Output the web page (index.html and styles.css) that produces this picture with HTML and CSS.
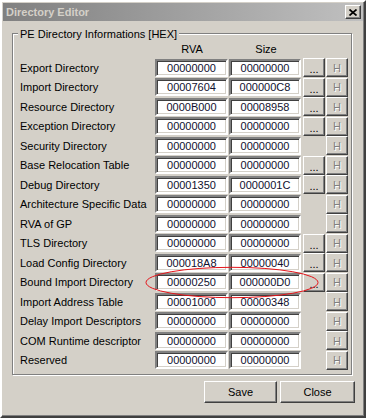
FILE: index.html
```html
<!DOCTYPE HTML>
<html>

<head>
    <meta name="viewport" content="width=device-width, initial-scale=1">
    <title>Directory Editor</title>
    <link rel="stylesheet" href="styles.css">
</head>

<body>
    <div class="window">
        <div class="titlebar">
            <span class="title">Directory Editor</span>
            <button class="closeBox" title="Close">
                <svg width="8" height="7" viewBox="0 0 8 7"><path d="M0.5 0.5 L7.5 6.5 M7.5 0.5 L0.5 6.5" stroke="#000" stroke-width="1.7" fill="none"/></svg>
            </button>
        </div>

        <div class="group">
            <span class="legend">PE Directory Informations [HEX]</span>
            <div class="grid">
                <span class="head"></span><span class="head">RVA</span><span class="head">Size</span>

                <span class="label">Export Directory</span>
                <input class="field" value="00000000" readonly><input class="field size" value="00000000" readonly>
                <button class="btn dots">...</button><button class="btn hex" disabled>H</button>

                <span class="label">Import Directory</span>
                <input class="field" value="00007604" readonly><input class="field size" value="000000C8" readonly>
                <button class="btn dots">...</button><button class="btn hex" disabled>H</button>

                <span class="label">Resource Directory</span>
                <input class="field" value="0000B000" readonly><input class="field size" value="00008958" readonly>
                <button class="btn dots">...</button><button class="btn hex" disabled>H</button>

                <span class="label">Exception Directory</span>
                <input class="field" value="00000000" readonly><input class="field size" value="00000000" readonly>
                <button class="btn dots">...</button><button class="btn hex" disabled>H</button>

                <span class="label">Security Directory</span>
                <input class="field" value="00000000" readonly><input class="field size" value="00000000" readonly>
                <button class="btn hex" disabled>H</button>

                <span class="label">Base Relocation Table</span>
                <input class="field" value="00000000" readonly><input class="field size" value="00000000" readonly>
                <button class="btn dots">...</button><button class="btn hex" disabled>H</button>

                <span class="label">Debug Directory</span>
                <input class="field" value="00001350" readonly><input class="field size" value="0000001C" readonly>
                <button class="btn dots">...</button><button class="btn hex" disabled>H</button>

                <span class="label">Architecture Specific Data</span>
                <input class="field" value="00000000" readonly><input class="field size" value="00000000" readonly>
                <button class="btn hex" disabled>H</button>

                <span class="label">RVA of GP</span>
                <input class="field" value="00000000" readonly><input class="field size" value="00000000" readonly>
                <button class="btn hex" disabled>H</button>

                <span class="label">TLS Directory</span>
                <input class="field" value="00000000" readonly><input class="field size" value="00000000" readonly>
                <button class="btn dots">...</button><button class="btn hex" disabled>H</button>

                <span class="label">Load Config Directory</span>
                <input class="field" value="000018A8" readonly><input class="field size" value="00000040" readonly>
                <button class="btn dots">...</button><button class="btn hex" disabled>H</button>

                <span class="label">Bound Import Directory</span>
                <input class="field" value="00000250" readonly><input class="field size" value="000000D0" readonly>
                <button class="btn dots">...</button><button class="btn hex" disabled>H</button>

                <span class="label">Import Address Table</span>
                <input class="field" value="00001000" readonly><input class="field size" value="00000348" readonly>
                <button class="btn hex" disabled>H</button>

                <span class="label">Delay Import Descriptors</span>
                <input class="field" value="00000000" readonly><input class="field size" value="00000000" readonly>
                <button class="btn hex" disabled>H</button>

                <span class="label">COM Runtime descriptor</span>
                <input class="field" value="00000000" readonly><input class="field size" value="00000000" readonly>
                <button class="btn hex" disabled>H</button>

                <span class="label">Reserved</span>
                <input class="field" value="00000000" readonly><input class="field size" value="00000000" readonly>
                <button class="btn hex" disabled>H</button>
            </div>
        </div>

        <div class="actions">
            <button class="btn saveButton">Save</button>
            <button class="btn closeButton">Close</button>
        </div>

        <!-- red marker drawn over the Bound Import row -->
        <svg class="marker" width="180" height="40" viewBox="0 0 180 40">
            <ellipse cx="88" cy="17.5" rx="86" ry="15.2" fill="none" stroke="#e4141a" stroke-width="1"/>
        </svg>
    </div>
</body>

</html>
```

FILE: styles.css
```css
html {
    font-family: "Liberation Sans", Arial, sans-serif;
    font-size: 11px;
}

body {
    margin: 0px;
    background: #d4d0c8;
}

.window {
    position: relative;
    box-sizing: border-box;
    width: 366px;
    height: 418px;
    padding: 1px;
    background: #d4d0c8;
    border: 2px solid;
    border-color: #ffffff #404040 #404040 #ffffff;
    box-shadow: inset -1px -1px #808080;
}

.titlebar {
    display: flex;
    align-items: center;
    height: 18px;
    padding: 0 2px 0 3px;
    background: linear-gradient(to right, #808080, #c0c0c0);
}

.title {
    flex: 1;
    font-weight: bold;
    color: #d4d0c8;
    line-height: 18px;
}

.closeBox {
    display: flex;
    align-items: center;
    justify-content: center;
    box-sizing: border-box;
    width: 16px;
    height: 14px;
    padding: 0;
    background: #d4d0c8;
    border: 1px solid;
    border-color: #ffffff #404040 #404040 #ffffff;
    box-shadow: inset -1px -1px #808080;
}

.group {
    position: relative;
    box-sizing: border-box;
    width: 340px;
    margin: 12px 0 0 9px;
    padding: 0 0 4px 7px;
    border: 1px solid #808080;
    box-shadow: 1px 1px 0 #ffffff, inset 1px 1px 0 #ffffff;
}

.legend {
    position: absolute;
    top: -6px;
    left: 5px;
    padding: 0 2px;
    line-height: 13px;
    background: #d4d0c8;
    color: #000;
}

.grid {
    display: grid;
    grid-template-columns: 135px 74px 74px 23px 22px;
    grid-template-rows: 24px;
    grid-auto-rows: 19.5px;
    align-items: center;
}

.head {
    align-self: end;
    padding-bottom: 2px;
    line-height: 13px;
    text-align: center;
    color: #000;
}

.label {
    grid-column: 1;
    color: #000;
    white-space: nowrap;
}

.field {
    box-sizing: border-box;
    width: 73px;
    height: 18px;
    margin: 0;
    padding: 0;
    font: 11px "Liberation Sans", Arial, sans-serif;
    color: #10102e;
    text-align: center;
    background: #ffffff;
    border: 2px solid;
    border-color: #808080 #ffffff #ffffff #808080;
    box-shadow: inset 1px 1px #404040, inset -1px -1px #d4d0c8;
    outline: none;
}

.field.size {
    width: 72px;
}

.btn {
    box-sizing: border-box;
    margin: 0;
    padding: 0;
    font: 11px "Liberation Sans", Arial, sans-serif;
    color: #000;
    background: #d4d0c8;
    border: 1px solid;
    border-color: #ffffff #404040 #404040 #ffffff;
    box-shadow: inset -1px -1px #808080;
}

.dots {
    grid-column: 4;
    width: 22px;
    height: 19px;
    padding-top: 3px;
}

.hex {
    grid-column: 5;
    width: 22px;
    height: 19px;
    color: #808080;
    text-shadow: 1px 1px 0 #ffffff;
}

.actions {
    display: flex;
    justify-content: flex-end;
    gap: 3px;
    margin-top: 6px;
    padding-right: 8px;
}

.saveButton {
    width: 73px;
    height: 22px;
}

.closeButton {
    width: 75px;
    height: 22px;
}

.marker {
    position: absolute;
    left: 142px;
    top: 263px;
}
```
